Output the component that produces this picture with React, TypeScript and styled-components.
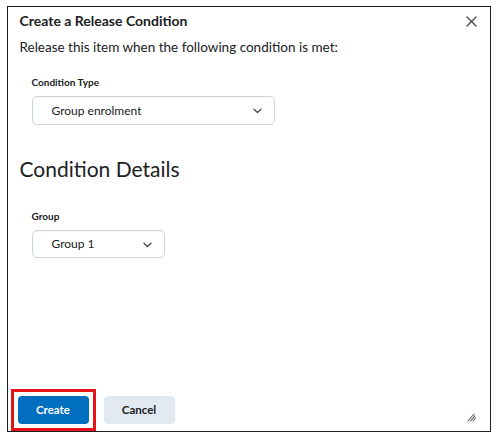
import React from "react";
import styled, { createGlobalStyle } from "styled-components";

const GlobalStyle = createGlobalStyle`
    html, body {
        margin: 0;
        padding: 0;
        background: #ffffff;
    }
    body {
        font-family: Lato, "Noto Sans", sans-serif;
        color: #202122;
    }
`;

const Page = styled.div`
    padding: 6px 0 0 7px;
    width: 499px;
    height: 442px;
    box-sizing: border-box;
`;

const Dialog = styled.div`
    position: relative;
    width: 484px;
    height: 426px;
    box-sizing: border-box;
    border: 1.5px solid #1e1e1e;
    background: #fff;
    display: flex;
    flex-direction: column;
`;

const Header = styled.div`
    display: flex;
    align-items: center;
    justify-content: space-between;
    padding: 4px 9px 0 11.5px;
    height: 20px;
`;

const Title = styled.h1`
    margin: 0;
    font-size: 14px;
    line-height: 20px;
    font-weight: 700;
`;

const CloseButton = styled.button`
    border: none;
    background: none;
    padding: 0;
    width: 20px;
    height: 20px;
    display: flex;
    align-items: center;
    justify-content: center;
    cursor: pointer;
    color: #494c4e;
`;

const Body = styled.div`
    flex: 1;
    padding: 6px 12px 0 11.5px;
`;

const Intro = styled.p`
    margin: 0;
    font-size: 13.5px;
    line-height: 20px;
`;

const Field = styled.div<{ $top: number }>`
    margin-top: ${(p) => p.$top}px;
    padding-left: 12px;
`;

const Label = styled.label`
    display: block;
    font-size: 10px;
    line-height: 16px;
    font-weight: 700;
    margin-bottom: 6px;
`;

const Select = styled.div<{ $width: number }>`
    width: ${(p) => p.$width}px;
    height: 28.5px;
    box-sizing: border-box;
    border: 1px solid #cdd5dc;
    border-radius: 5px;
    display: flex;
    align-items: center;
    justify-content: space-between;
    padding: 0 12px 0 19px;
    font-size: 12px;
    box-shadow: inset 0 1px 1px rgba(0, 0, 0, 0.04);
`;

const Chevron = styled.svg`
    width: 9px;
    height: 6px;
    margin-top: 2px;
`;

const SectionHeading = styled.h2`
    margin: 30px 0 0;
    font-size: 21px;
    line-height: 28px;
    font-weight: 400;
`;

const Footer = styled.div`
    display: flex;
    align-items: center;
    gap: 8px;
    padding: 0 0 0.5px 2.5px;
`;

const Highlight = styled.div`
    display: flex;
    padding: 4px;
    border: 3px solid #e3151a;
`;

const Button = styled.button<{ $primary?: boolean }>`
    width: 71px;
    height: 28px;
    border: none;
    border-radius: 4px;
    font-family: Lato, "Noto Sans", sans-serif;
    font-size: 11.5px;
    font-weight: 700;
    cursor: pointer;
    background: ${(p) => (p.$primary ? "#006fbf" : "#e3e9f1")};
    color: ${(p) => (p.$primary ? "#ffffff" : "#202122")};
`;

const Grip = styled.svg`
    position: absolute;
    right: 14px;
    bottom: 9px;
    width: 9px;
    height: 9px;
`;

const ChevronIcon = () => (
    <Chevron viewBox="0 0 9 6">
        <path
            d="M1 1.2 L4.5 4.5 L8 1.2"
            fill="none"
            stroke="#494c4e"
            strokeWidth="1.3"
            strokeLinecap="round"
            strokeLinejoin="round"
        />
    </Chevron>
);

const App: React.FC = () => {
    return (
        <>
            <GlobalStyle />
            <Page>
                <Dialog>
                    <Header>
                        <Title>Create a Release Condition</Title>
                        <CloseButton aria-label="Close">
                            <svg width="11" height="11" viewBox="0 0 11 11">
                                <path
                                    d="M1 1 L10 10 M10 1 L1 10"
                                    stroke="#494c4e"
                                    strokeWidth="1.4"
                                    strokeLinecap="round"
                                />
                            </svg>
                        </CloseButton>
                    </Header>
                    <Body>
                        <Intro>
                            Release this item when the following condition is
                            met:
                        </Intro>
                        <Field $top={17}>
                            <Label>Condition Type</Label>
                            <Select $width={243}>
                                Group enrolment
                                <ChevronIcon />
                            </Select>
                        </Field>
                        <SectionHeading>Condition Details</SectionHeading>
                        <Field $top={25}>
                            <Label>Group</Label>
                            <Select $width={133}>
                                Group 1
                                <ChevronIcon />
                            </Select>
                        </Field>
                    </Body>
                    <Footer>
                        <Highlight>
                            <Button $primary>Create</Button>
                        </Highlight>
                        <Button>Cancel</Button>
                    </Footer>
                    <Grip viewBox="0 0 9 9">
                        <path
                            d="M1 8 L7 1 M3.5 8 L8 2.8 M6 8 L8.5 5"
                            stroke="#5a5e61"
                            strokeWidth="1.1"
                            strokeLinecap="round"
                        />
                    </Grip>
                </Dialog>
            </Page>
        </>
    );
};

export default App;
